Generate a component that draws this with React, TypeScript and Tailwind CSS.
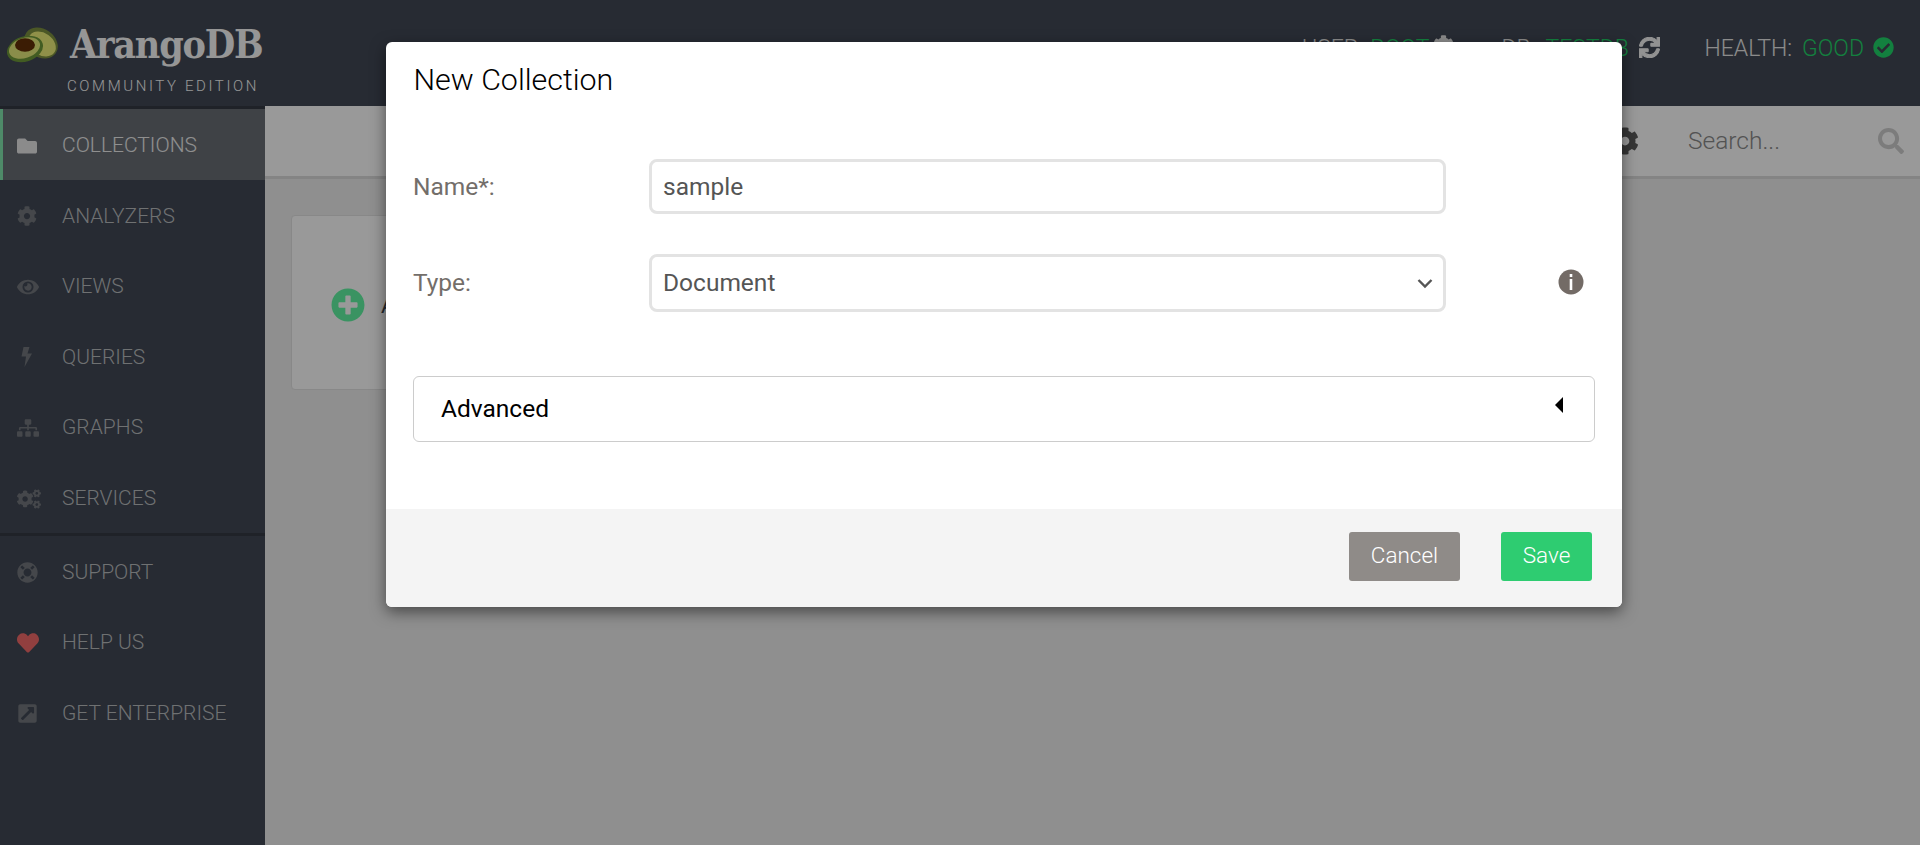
import React from "react";
import {
  FaFolder, FaCog, FaEye, FaSitemap, FaCogs, FaLifeRing, FaHeart,
  FaExternalLinkSquareAlt, FaCheckCircle, FaPlusCircle, FaSearch, FaSync,
} from "react-icons/fa";

function Bolt({ size, className }: { size: number; className?: string }) {
  return (
    <svg width={size} height={size} viewBox="0 0 20 20" className={className} fill="currentColor">
      <path d="M6.5 0 H12.5 L10.5 6.5 H15 L7.5 20 L9 9.5 H4.5 Z" />
    </svg>
  );
}

const top = [
  { label: "ANALYZERS", Icon: FaCog, s: 20 },
  { label: "VIEWS", Icon: FaEye, s: 22 },
  { label: "QUERIES", Icon: Bolt, s: 20 },
  { label: "GRAPHS", Icon: FaSitemap, s: 22 },
  { label: "SERVICES", Icon: FaCogs, s: 24 },
];

function Item({ label, Icon, s, cls = "" }: { label: string; Icon: any; s: number; cls?: string }) {
  return (
    <div className="flex h-[70.6px] items-center pl-[17px] pt-[2px] text-[21px] font-light text-[#b9bcbf]">
      <span className="flex w-[45px] shrink-0 items-center">
        <Icon size={s} className={cls || "text-[#73777d]"} />
      </span>
      <span>{label}</span>
    </div>
  );
}

export default function App() {
  return (
    <div className="relative flex h-[845px] w-[1920px] overflow-hidden bg-[#eeeeee] font-['Roboto',sans-serif]">
      <aside className="flex h-full w-[265px] shrink-0 flex-col bg-[#414855]">
        <div className="flex h-[106px] flex-col">
          <div className="flex h-[72px] items-start pl-[7px] pt-[25px]">
            <svg width="54" height="40" viewBox="0 0 54 40" className="shrink-0">
              <ellipse cx="34" cy="18" rx="18" ry="14" transform="rotate(35 34 18)" fill="#7d9140" />
              <ellipse cx="35" cy="19" rx="15" ry="11" transform="rotate(35 35 19)" fill="#eef17a" />
              <ellipse cx="18" cy="24" rx="18.5" ry="12.5" transform="rotate(-18 18 24)" fill="#6f9a39" />
              <ellipse cx="17.5" cy="23" rx="16" ry="10" transform="rotate(-18 17.5 23)" fill="#e6ec7c" />
              <ellipse cx="18" cy="20" rx="10" ry="6.8" fill="#632f08" />
            </svg>
            <span className="ml-[9px] mt-[-10px] font-['DejaVu_Serif_Condensed','DejaVu_Serif',serif] text-[39px] font-bold tracking-[-1.2px] text-[#fbfbfb]">ArangoDB</span>
          </div>
          <div className="pl-[67px] pt-[3px] text-[15px] font-light tracking-[2.6px] text-[#fbfbfb]">COMMUNITY EDITION</div>
        </div>
        <div className="h-[3px] bg-[#353a44]" />
        <div className="flex h-[71px] items-center border-l-[3px] border-[#83e6ae] bg-[#696f76] pl-[14px] pt-[2px] text-[21px] font-light text-[#eeeeee]">
          <span className="flex w-[45px] shrink-0 items-center"><FaFolder size={20} className="text-[#e8e8e8]" /></span>
          <span>COLLECTIONS</span>
        </div>
        {top.map((t) => <Item key={t.label} {...t} />)}
        <div className="h-[3px] bg-[#353a44]" />
        <Item label="SUPPORT" Icon={FaLifeRing} s={21} />
        <Item label="HELP US" Icon={FaHeart} s={22} cls="text-[#f26a6a]" />
        <Item label="GET ENTERPRISE" Icon={FaExternalLinkSquareAlt} s={21} />
      </aside>

      <main className="flex min-w-0 flex-1 flex-col">
        <header className="flex h-[106px] items-start justify-end bg-[#414855] pr-[26px] pt-[32px] text-[23px] font-light text-[#e8e8e8]">
          <span>USER:</span>
          <span className="ml-[7px] text-[#21d569]">ROOT</span>
          <FaCog size={21} className="ml-[3px] mt-[3px] text-[#e8e8e8]" />
          <span className="ml-[48px]">DB:</span>
          <span className="ml-[10px] text-[#21d569]">TESTDB</span>
          <FaSync size={21} stroke="currentColor" strokeWidth={25} className="ml-[10px] mt-[5px] text-[#f4f4f4]" />
          <span className="ml-[44.5px]">HEALTH:</span>
          <span className="ml-[10px] text-[#21d569]">GOOD</span>
          <FaCheckCircle size={21} className="ml-[9px] mt-[5px] text-[#21d569]" />
        </header>
        <div className="flex h-[73px] items-center justify-end border-b-[3px] border-[#dcdcdc] bg-white pr-[16px]">
          <FaCog size={28} className="text-[#5a5a5a]" />
          <span className="ml-[49px] text-[24.5px] font-light text-[#8a8a8a]">Search...</span>
          <FaSearch size={26} className="ml-[98px] text-[#cfcfcf]" />
        </div>
        <div className="flex-1 p-[36px_26px]">
          <div className="flex h-[175px] w-[350px] items-center rounded-[4px] border border-[#e3e3e3] bg-white pl-[39px] pt-[5px]">
            <FaPlusCircle size={34} className="text-[#62f5a3]" />
            <span className="ml-[16px] text-[22px] text-[#40474d]">Add Collection</span>
          </div>
        </div>
      </main>

      <div className="absolute inset-0 bg-black/40" />

      <div className="absolute left-[386px] top-[42px] flex h-[565px] w-[1236px] flex-col overflow-hidden rounded-[6px] bg-white shadow-[0_5px_15px_rgba(0,0,0,0.5)]">
        <div className="flex h-[75px] items-center pl-[27.5px] text-[30.4px] font-light text-black">New Collection</div>
        <div className="flex flex-1 flex-col px-[27px]">
          <div className="mt-[42px] flex h-[55px] items-center">
            <span className="w-[236px] pt-[1px] text-[24.5px] text-[#736e6a]">Name*:</span>
            <div className="flex h-[55px] w-[797px] items-center rounded-[8px] border-[3px] border-[#e3e3e3] pl-[11px] pt-[1px] text-[24.5px] text-[#555555]">sample</div>
          </div>
          <div className="mt-[40px] flex h-[58px] items-center">
            <span className="w-[236px] text-[24.5px] text-[#736e6a]">Type:</span>
            <div className="flex h-[58px] w-[797px] items-center justify-between rounded-[8px] border-[3px] border-[#e3e3e3] pl-[11px] pr-[10px] text-[24.5px] text-[#555555]">
              <span>Document</span>
              <svg width="16" height="11" viewBox="0 0 16 11" fill="none" stroke="#555555" strokeWidth="2.4"><path d="M1.5 2 L8 8.5 L14.5 2" /></svg>
            </div>
            <svg width="26" height="26" viewBox="0 0 26 26" className="ml-[112px] mt-[-3px]">
              <circle cx="13" cy="13" r="12.5" fill="#736b66" />
              <rect x="11.7" y="5" width="2.6" height="3" fill="#ffffff" />
              <rect x="11.7" y="10" width="2.6" height="11" fill="#ffffff" />
            </svg>
          </div>
          <div className="mt-[64px] flex h-[66px] w-[1182px] items-center justify-between rounded-[6px] border border-[#cccccc] pl-[27px] pr-[31px] text-[24.5px] text-black">
            <span>Advanced</span>
            <svg width="8" height="16" viewBox="0 0 8 16" className="mt-[-9px]"><path d="M8 0 V16 L0 8 Z" fill="#000000" /></svg>
          </div>
        </div>
        <div className="flex h-[98px] items-center justify-end gap-[41px] bg-[#f4f4f4] pb-[4px] pr-[30px] text-[22.5px] font-light text-white">
          <div className="flex h-[49px] w-[111px] items-center justify-center rounded-[3px] bg-[#8f8b88]">Cancel</div>
          <div className="flex h-[49px] w-[91px] items-center justify-center rounded-[3px] bg-[#2ecc71]">Save</div>
        </div>
      </div>
    </div>
  );
}
